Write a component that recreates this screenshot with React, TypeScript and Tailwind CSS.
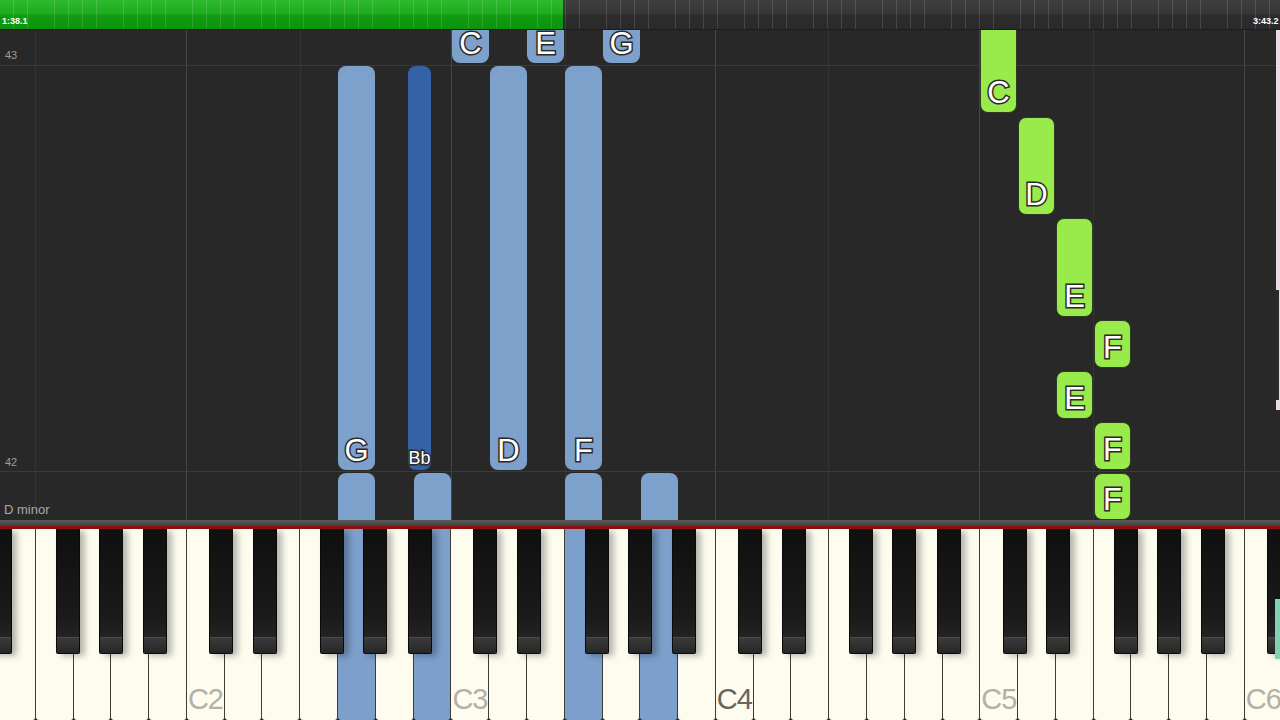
import React from "react";

const WK = 37.79;
const X0 = -2;
const LETTERS = ["C", "D", "E", "F", "G", "A", "B"];
const BLACK_OFF: Record<string, number> = { C: 22, D: 28, F: 20, G: 25, A: 32 };
const PRESSED = ["G2", "B2", "F3", "A3"];

type Key = { name: string; letter: string; octave: number; x: number };

// white keys from D1 (just off-screen) onwards
const whiteKeys: Key[] = Array.from({ length: 36 }, (_, i) => {
  const n = i + 1; // D1 = letter index 1
  const letter = LETTERS[n % 7];
  const octave = 1 + Math.floor(n / 7);
  return { name: `${letter}${octave}`, letter, octave, x: X0 + (i - 1) * WK };
});

const blackKeys = whiteKeys
  .filter((k) => BLACK_OFF[k.letter] !== undefined)
  .map((k) => ({ name: k.name + "#", x: k.x + BLACK_OFF[k.letter] }));

type Note = { x: number; w?: number; top: number; h: number; label?: string; kind: "blue" | "dark" | "green" };

const notes: Note[] = [
  { x: 452, top: -12, h: 45, label: "C", kind: "blue" },
  { x: 527, top: -12, h: 45, label: "E", kind: "blue" },
  { x: 603, top: -12, h: 45, label: "G", kind: "blue" },
  { x: 338, top: 36, h: 404, label: "G", kind: "blue" },
  { x: 408, w: 23, top: 36, h: 404, label: "Bb", kind: "dark" },
  { x: 490, top: 36, h: 404, label: "D", kind: "blue" },
  { x: 565, top: 36, h: 404, label: "F", kind: "blue" },
  { x: 338, top: 443, h: 60, kind: "blue" },
  { x: 414, top: 443, h: 60, kind: "blue" },
  { x: 565, top: 443, h: 60, kind: "blue" },
  { x: 641, top: 443, h: 60, kind: "blue" },
  { x: 980, top: -12, h: 95, label: "C", kind: "green" },
  { x: 1018, top: 87, h: 98, label: "D", kind: "green" },
  { x: 1056, top: 188, h: 99, label: "E", kind: "green" },
  { x: 1094, top: 290, h: 48, label: "F", kind: "green" },
  { x: 1056, top: 341, h: 48, label: "E", kind: "green" },
  { x: 1094, top: 392, h: 48, label: "F", kind: "green" },
  { x: 1094, top: 443, h: 47, label: "F", kind: "green" },
];

const cLines = [186, 451, 715, 979, 1244];
const fLines = [35, 300, 565, 828, 1093];

function NoteBlock({ n }: { n: Note }) {
  const color =
    n.kind === "green"
      ? "bg-[#99ea4b] border border-[#2c3a22]"
      : n.kind === "dark"
      ? "bg-[#3561a6]"
      : "bg-[#7ea1cb]";
  return (
    <div
      className={`absolute flex items-end justify-center rounded-[8px] ${color}`}
      style={{ left: n.x, top: n.top, width: n.w ?? 37, height: n.h }}
    >
      {n.label && (
        <span
          className={`text-white [-webkit-text-stroke:3px_#2a2a2a] [paint-order:stroke_fill] ${
            n.label === "Bb" ? "pb-[3px] text-[18px] leading-none" : "pb-[6px] text-[31px] leading-[0.8]"
          }`}
        >
          {n.label}
        </span>
      )}
    </div>
  );
}

function TopBar() {
  return (
    <div className="relative flex h-[30px] shrink-0">
      <div className="w-[563px] bg-[linear-gradient(to_bottom,#2dbb2d_0%,#1eab1e_45%,#119b11_52%,#0c930c_100%)]" />
      <div className="flex-1 bg-[linear-gradient(to_bottom,#3e3e3e_0%,#363636_45%,#2c2c2c_52%,#292929_100%)]" />
      <div className="absolute inset-0 bg-[repeating-linear-gradient(to_right,transparent_0,transparent_13px,rgba(255,255,255,0.13)_13px,rgba(255,255,255,0.13)_13.8px)]" />
      <span className="absolute left-[2px] top-[17px] font-['Liberation_Sans',sans-serif] text-[9px] font-bold leading-none text-white">
        1:38.1
      </span>
      <span className="absolute left-[1253px] top-[17px] font-['Liberation_Sans',sans-serif] text-[9px] font-bold leading-none text-white">
        3:43.2
      </span>
      <div className="absolute inset-x-0 bottom-0 h-px bg-[#1c1c1c]" />
    </div>
  );
}

function Roll() {
  return (
    <div className="relative h-[490px] shrink-0 overflow-hidden bg-[#282828]">
      {fLines.map((x) => (
        <div key={x} className="absolute inset-y-0 w-px bg-[#333333]" style={{ left: x }} />
      ))}
      {cLines.map((x) => (
        <div key={x} className="absolute inset-y-0 w-px bg-[#464646]" style={{ left: x }} />
      ))}
      <div className="absolute inset-x-0 top-[35px] h-px bg-[#3a3a3a]" />
      <div className="absolute inset-x-0 top-[441px] h-px bg-[#3a3a3a]" />
      <span className="absolute left-[5px] top-[20px] text-[11px] leading-none text-[#9c9c9c]">43</span>
      <span className="absolute left-[5px] top-[427px] text-[11px] leading-none text-[#9c9c9c]">42</span>
      <span className="absolute left-[4px] top-[473px] text-[13px] leading-none text-[#a9a9a9]">D minor</span>
      {notes.map((n, i) => (
        <NoteBlock key={i} n={n} />
      ))}
      <div className="absolute right-0 top-0 h-[380px] w-[4px] bg-[#e9dce6]" />
      <div className="absolute right-[1px] top-[260px] h-[110px] w-[3px] bg-[#2a2a2a]" />
    </div>
  );
}

function Keyboard() {
  return (
    <div className="relative flex-1 overflow-hidden bg-[#1b1b1b]">
      <div className="flex h-full" style={{ marginLeft: whiteKeys[0].x }}>
        {whiteKeys.map((k) => {
          const pressed = PRESSED.includes(k.name);
          const mid = k.name === "C4";
          return (
            <div
              key={k.name}
              className={`relative h-full w-[37.79px] shrink-0 rounded-b-[3px] border-r border-[#3d3d38] ${
                pressed ? "bg-[#7c9fcb]" : "bg-[#fdfcef]"
              }`}
            >
              {k.letter === "C" && (
                <span
                  className={`absolute bottom-[6px] left-[1px] text-[29px] leading-none tracking-[-1px] ${
                    mid ? "text-[#66665e]" : "text-[#b3b1a6]"
                  }`}
                >
                  {k.name}
                </span>
              )}
            </div>
          );
        })}
      </div>
      {blackKeys.map((b) => (
        <div
          key={b.name}
          className="absolute top-0 flex h-[125px] w-[24px] flex-col overflow-hidden rounded-b-[2px] border-x border-b border-[#0a0a0a] bg-[linear-gradient(to_bottom,#0f0f0f_0%,#1a1a1a_70%,#2a2a2a_100%)] shadow-[5px_2px_6px_rgba(0,0,0,0.28)]"
          style={{ left: b.x }}
        >
          <div className="flex-1" />
          <div className="h-[16px] border-t border-[#4a4a4a] bg-[linear-gradient(to_bottom,#3a3a3a,#262626)]" />
        </div>
      ))}
      <div className="absolute right-0 top-[70px] h-[60px] w-[5px] bg-[#7fd3b0]" />
    </div>
  );
}

export default function App() {
  return (
    <div className="flex h-[720px] w-[1280px] flex-col overflow-hidden bg-[#282828] font-['Liberation_Sans',sans-serif]">
      <TopBar />
      <Roll />
      <div className="h-[6px] shrink-0 bg-[linear-gradient(to_bottom,#5a5a5a,#404040)]" />
      <div className="h-[3px] shrink-0 bg-[#8a1010]" />
      <Keyboard />
    </div>
  );
}
